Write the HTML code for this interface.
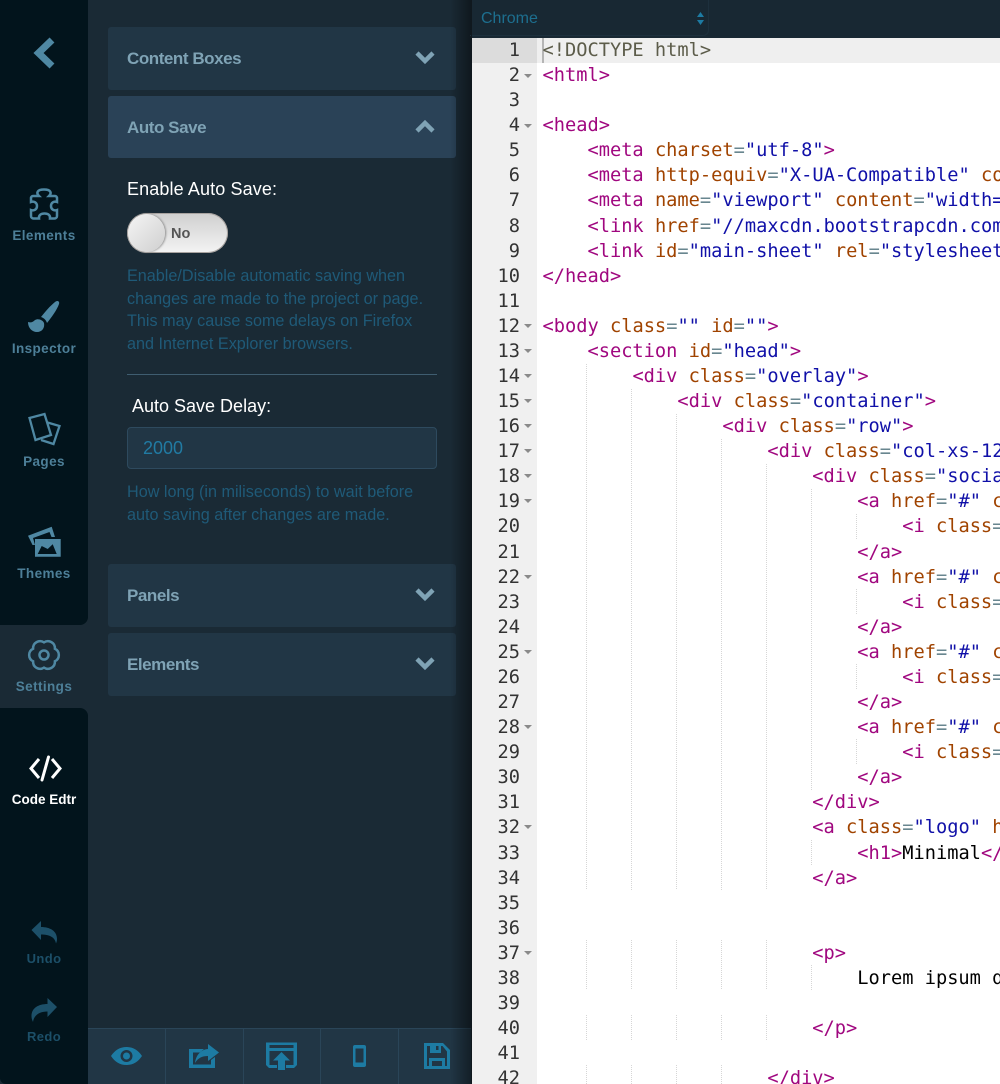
<!DOCTYPE html>
<html><head><meta charset="utf-8"><title>Editor</title>
<style>
html,body{margin:0;padding:0;width:1000px;height:1084px;overflow:hidden;background:#1a2a35;font-family:"Liberation Sans",sans-serif}
#wrap{position:relative;width:1000px;height:1084px;overflow:hidden;background:#1a2a35}
.abs,.nl,.bar,.lb,.p{position:absolute}
.nav{position:absolute;left:0;width:88px;background:#02141c}
.nl{left:0;width:88px;text-align:center;font-size:13.5px;font-weight:700;color:#4d7f98;letter-spacing:.4px;line-height:16px}
.bar{left:108px;width:348px;height:63px;background:#213645;border-radius:3px}
.bar.on{background:#2a4257}
.bar b{position:absolute;left:19px;top:21px;font-size:17px;line-height:22px;color:#7fa3b5;letter-spacing:-.45px}
.p{left:127px;font-size:16.2px;line-height:22.5px;color:#1f5a78;white-space:nowrap}
.lb{color:#fff;font-size:18px;line-height:22px;white-space:nowrap}
#code,#nums{position:absolute;top:38px;font-family:"DejaVu Sans Mono",monospace;font-size:18.68px;line-height:25.08px;color:#000;height:1046px;overflow:hidden}
#code{left:542.5px;width:458px}
#nums{left:472px;width:48px;text-align:right;color:#333}
#code div,#nums div{height:25.08px;white-space:pre}
.t{color:#a0077f}.a{color:#a04300}.s{color:#1010a8}.o{color:#68868f}.d{color:#5c5c4a}
</style></head><body><div id="wrap">

<!-- side panel -->
<div class="bar" style="top:27px"><b>Content Boxes</b></div>
<div class="bar on" style="top:96px;height:62px"><b>Auto Save</b></div>
<div class="bar" style="top:564px"><b>Panels</b></div>
<div class="bar" style="top:633px"><b>Elements</b></div>

<div class="lb" style="left:127px;top:178px;letter-spacing:.12px">Enable Auto Save:</div>
<div class="abs" style="left:127px;top:213px;width:101px;height:40px;border-radius:20px;background:linear-gradient(#cfcfcf,#f4f4f4);box-shadow:inset 0 0 0 1px #a8a3a0"></div>
<div class="abs" style="left:128px;top:214px;width:37px;height:38px;border-radius:50%;background:linear-gradient(135deg,#f5f5f5,#cfcfcf);box-shadow:1px 0 2px #8a8a8a"></div>
<div class="abs" style="left:171px;top:225px;font-size:14.5px;line-height:18px;font-weight:700;color:#555">No</div>

<div class="p" style="top:265px">Enable/Disable automatic saving when<br>changes are made to the project or page.<br>This may cause some delays on Firefox<br>and Internet Explorer browsers.</div>
<div class="abs" style="left:127px;top:374px;width:310px;height:1px;background:#3f5d70"></div>
<div class="lb" style="left:132px;top:395px">Auto Save Delay:</div>
<div class="abs" style="left:127px;top:427px;width:308px;height:40px;background:#213645;border:1px solid #2e4a5e;border-radius:4px"></div>
<div class="abs" style="left:143px;top:437px;font-size:18px;line-height:22px;color:#217ba3">2000</div>
<div class="p" style="top:481px">How long (in miliseconds) to wait before<br>auto saving after changes are made.</div>

<!-- bottom toolbar -->
<div class="abs" style="left:88px;top:1028px;width:384px;height:56px;background:#213645;border-top:1px solid #2a4558;box-sizing:border-box"></div>
<div class="abs" style="left:165px;top:1028px;width:1px;height:56px;background:#2a4558"></div>
<div class="abs" style="left:243px;top:1028px;width:1px;height:56px;background:#2a4558"></div>
<div class="abs" style="left:320px;top:1028px;width:1px;height:56px;background:#2a4558"></div>
<div class="abs" style="left:398px;top:1028px;width:1px;height:56px;background:#2a4558"></div>
<div class="abs" style="left:450px;top:0;width:22px;height:1084px;background:linear-gradient(90deg,rgba(0,0,0,0),rgba(0,0,0,.45))"></div>

<!-- left nav -->
<div class="nav" style="top:0;height:625px;border-bottom-right-radius:8px"></div>
<div class="nav" style="top:708px;height:376px;border-top-right-radius:8px;border-bottom-left-radius:6px"></div>
<div class="nl" style="top:228px">Elements</div>
<div class="nl" style="top:341px">Inspector</div>
<div class="nl" style="top:454px">Pages</div>
<div class="nl" style="top:566px">Themes</div>
<div class="nl" style="top:679px">Settings</div>
<div class="nl" style="top:792px;color:#fff;letter-spacing:0">Code Edtr</div>
<div class="nl" style="top:951px;color:#1c4f68;font-size:13px">Undo</div>
<div class="nl" style="top:1029px;color:#1c4f68;font-size:13px">Redo</div>

<svg class="abs" style="left:0;top:0" width="472" height="1084" viewBox="0 0 472 1084">
<g fill="none" stroke="#4f88a3">
<path d="M52 40 38.500 53 52 66" stroke-width="7"/>
<path d="M39 196C36 193 37 189.500 44 189.500S52 193 49 196H55A2 2 0 0 1 57 198V202C54 201 51 202.500 51 206S54 211 57 210V216A2.500 2.500 0 0 1 54.500 218.500H50C50.500 215 48 213.500 44.500 213.500S38.500 215 39 218.500H33.500A2.500 2.500 0 0 1 31 216V210C34 211 37 209.500 37 206S34 201 31 202V198A2 2 0 0 1 33 196Z" stroke-width="2.500"/>
<path d="M29.500 418 44.500 414 51 435 35.500 440zM47.500 422.500 59.500 426 53.500 444 41 440" stroke-width="2.300"/>
<path d="M54.900 648.700A7 7 0 0 1 54.900 661.300 7 7 0 0 1 44 667.600 7 7 0 0 1 33.100 661.300 7 7 0 0 1 33.100 648.700 7 7 0 0 1 44 642.400 7 7 0 0 1 54.900 648.700z" stroke-width="2.500"/>
<circle cx="44" cy="655" r="4.500" stroke-width="2.500"/>
</g>
<g fill="#4f88a3">
<path d="M55 302c2-2 5-1 4 2-2 6-8 14-12 19-1-3-3-5-6-6 4-5 9-11 14-15z"/>
<path d="M28 322c3 1 5 0 7-2 3-2 8 0 9 3 1 5-2 9-7 9-5 0-9-4-9-10z"/>
<path d="M28 535.700 51.700 526.700 55 537H51.500L49.500 532 33 538 35 545H32.500z"/>
<path d="M35 539H60.700V556.700H35zM37.700 554H56.700L52.700 544.300 47.700 549 41.700 546z" fill-rule="evenodd"/>
</g>
<g fill="none" stroke="#fff" stroke-width="3">
<path d="M39 759 31 768.500 39 778M52 759 60 768.500 52 778"/>
<path d="M48.500 757 42 780" stroke-linecap="round"/>
</g>
<g fill="#1d5069">
<path d="M31.500 930 41 921V927C50 927 57 931 57 939 57 941 56.500 942 56 943.500 55 937 49 934.500 41 934.500V940z"/>
<path d="M57 1007 47.500 998V1004C38.500 1004 31.500 1008 31.500 1016 31.500 1019 32.500 1020.500 33 1022 34 1015 39.500 1011.500 47.500 1011.500V1017z"/>
</g>
<!-- toolbar icons -->
<g fill="#1d7ba3">
<path fill-rule="evenodd" d="M111 1056C115 1050 120 1047 126.500 1047S138 1050 142 1056C138 1062 133 1065 126.500 1065S115 1062 111 1056ZM126.500 1050A6 6 0 1 0 126.500 1062 6 6 0 0 0 126.500 1050Z"/>
<circle cx="126.500" cy="1056" r="3.500"/>
<path d="M189 1049H204L200 1052.500H193V1064.500H211V1060L215 1057V1068H189z"/>
<path d="M208 1044 219 1052.500 208 1061V1056C202 1056 198 1058 195 1063 196 1055 201 1049.500 208 1049z"/>
<path d="M266 1042.500H297V1065L294 1068H286V1065H293.500V1051H269.500V1065H277V1068H269L266 1065ZM269.500 1045V1048H293.500V1045Z" fill-rule="evenodd"/>
<path d="M281.500 1052 290 1060.500H285V1070H278V1060.500H273z"/>
<path fill-rule="evenodd" d="M355 1045H364A2 2 0 0 1 366 1047V1065A2 2 0 0 1 364 1067H355A2 2 0 0 1 353 1065V1047A2 2 0 0 1 355 1045ZM355.500 1048.500V1062.500H363.500V1048.500Z"/>
<path fill-rule="evenodd" d="M424 1043H443L450 1050V1069H424ZM427 1046V1066H429V1058H445V1066H447V1051.500L442.500 1046H441V1053H430V1046ZM432 1061V1066H442V1061ZM436 1046V1050H438.500V1046Z"/>
</g>
<!-- chevrons -->
<g fill="none" stroke="#7fa3b5" stroke-width="4.500">
<path d="M417 53 425 61 433 53"/>
<path d="M417 131 425 123 433 131"/>
<path d="M417 590 425 598 433 590"/>
<path d="M417 659 425 667 433 659"/>
</g>
</svg>

<!-- editor -->
<div class="abs" style="left:472px;top:0;width:528px;height:38px;background:#182833"></div>
<div class="abs" style="left:470px;top:0;width:239px;height:36px;border:1px solid #1d303d;border-radius:0 0 6px 0;box-sizing:border-box;border-left:0;border-top:0"></div>
<div class="abs" style="left:481px;top:9px;font-size:16px;line-height:20px;color:#1d6f8f">Chrome</div>
<svg class="abs" style="left:694px;top:10px" width="14" height="18"><path d="M3 7 6.500 2 10 7zM3 10H10L6.500 15z" fill="#1d7ba3"/></svg>

<div class="abs" style="left:472px;top:38px;width:528px;height:1046px;background:#fff"></div>
<div class="abs" style="left:472px;top:38px;width:65px;height:1046px;background:#f0f0f0"></div>
<div class="abs" style="left:537px;top:38px;width:463px;height:25px;background:#efefef"></div>
<div class="abs" style="left:472px;top:38px;width:65px;height:25px;background:#dcdcdc"></div>
<div class="abs" style="left:542px;top:38px;width:2px;height:25px;background:#b5b5b5"></div>
<div class="abs" style="left:471px;top:0;width:1px;height:1084px;background:#10181e"></div>

<svg class="abs" style="left:472px;top:38px" width="528" height="1046">
<g fill="#8a8a8a">
<path d="M52 36H60L56 40z"/>
<path d="M52 86H60L56 90z"/><path d="M52 286H60L56 290z"/><path d="M52 311H60L56 315z"/><path d="M52 336H60L56 340z"/><path d="M52 361H60L56 365z"/><path d="M52 386H60L56 390z"/><path d="M52 411H60L56 415z"/><path d="M52 436H60L56 440z"/><path d="M52 461H60L56 465z"/><path d="M52 537H60L56 541z"/><path d="M52 612H60L56 616z"/><path d="M52 687H60L56 691z"/><path d="M52 787H60L56 791z"/><path d="M52 913H60L56 917z"/>
</g>
<g stroke="#d6d6d6" stroke-width="1" stroke-dasharray="1 1" fill="none">
<path d="M114.500 326V852M114.500 902V952M114.500 977V1002M114.500 1027V1046"/>
<path d="M159.500 351V852M159.500 902V952M159.500 977V1002M159.500 1027V1046"/>
<path d="M204.500 376V852M204.500 902V952M204.500 977V1002M204.500 1027V1046"/>
<path d="M249.500 401V852M249.500 902V952M249.500 977V1002M249.500 1027V1046"/>
<path d="M294.500 426V852M294.500 902V952M294.500 977V1002"/>
<path d="M339.500 451V752M339.500 802V827M339.500 927V952"/>
<path d="M384.500 476V501M384.500 551V576M384.500 626V651M384.500 701V726"/>
</g>
</svg>

<div id="nums"><div>1</div><div>2</div><div>3</div><div>4</div><div>5</div><div>6</div><div>7</div><div>8</div><div>9</div><div>10</div><div>11</div><div>12</div><div>13</div><div>14</div><div>15</div><div>16</div><div>17</div><div>18</div><div>19</div><div>20</div><div>21</div><div>22</div><div>23</div><div>24</div><div>25</div><div>26</div><div>27</div><div>28</div><div>29</div><div>30</div><div>31</div><div>32</div><div>33</div><div>34</div><div>35</div><div>36</div><div>37</div><div>38</div><div>39</div><div>40</div><div>41</div><div>42</div></div>

<div id="code"><div class="d">&lt;!DOCTYPE html&gt;</div>
<div class="t">&lt;html&gt;</div>
<div></div>
<div class="t">&lt;head&gt;</div>
<div>    <span class="t">&lt;meta</span> <span class="a">charset</span><span class="o">=</span><span class="s">"utf-8"</span><span class="t">&gt;</span></div>
<div>    <span class="t">&lt;meta</span> <span class="a">http-equiv</span><span class="o">=</span><span class="s">"X-UA-Compatible"</span> <span class="a">content</span></div>
<div>    <span class="t">&lt;meta</span> <span class="a">name</span><span class="o">=</span><span class="s">"viewport"</span> <span class="a">content</span><span class="o">=</span><span class="s">"width=device</span></div>
<div>    <span class="t">&lt;link</span> <span class="a">href</span><span class="o">=</span><span class="s">"//maxcdn.bootstrapcdn.com/boot</span></div>
<div>    <span class="t">&lt;link</span> <span class="a">id</span><span class="o">=</span><span class="s">"main-sheet"</span> <span class="a">rel</span><span class="o">=</span><span class="s">"stylesheet"</span></div>
<div class="t">&lt;/head&gt;</div>
<div></div>
<div><span class="t">&lt;body</span> <span class="a">class</span><span class="o">=</span><span class="s">""</span> <span class="a">id</span><span class="o">=</span><span class="s">""</span><span class="t">&gt;</span></div>
<div>    <span class="t">&lt;section</span> <span class="a">id</span><span class="o">=</span><span class="s">"head"</span><span class="t">&gt;</span></div>
<div>        <span class="t">&lt;div</span> <span class="a">class</span><span class="o">=</span><span class="s">"overlay"</span><span class="t">&gt;</span></div>
<div>            <span class="t">&lt;div</span> <span class="a">class</span><span class="o">=</span><span class="s">"container"</span><span class="t">&gt;</span></div>
<div>                <span class="t">&lt;div</span> <span class="a">class</span><span class="o">=</span><span class="s">"row"</span><span class="t">&gt;</span></div>
<div>                    <span class="t">&lt;div</span> <span class="a">class</span><span class="o">=</span><span class="s">"col-xs-12"</span></div>
<div>                        <span class="t">&lt;div</span> <span class="a">class</span><span class="o">=</span><span class="s">"social"</span></div>
<div>                            <span class="t">&lt;a</span> <span class="a">href</span><span class="o">=</span><span class="s">"#"</span> <span class="a">class</span></div>
<div>                                <span class="t">&lt;i</span> <span class="a">class</span><span class="o">=</span><span class="s">"fa</span></div>
<div>                            <span class="t">&lt;/a&gt;</span></div>
<div>                            <span class="t">&lt;a</span> <span class="a">href</span><span class="o">=</span><span class="s">"#"</span> <span class="a">class</span></div>
<div>                                <span class="t">&lt;i</span> <span class="a">class</span><span class="o">=</span><span class="s">"fa</span></div>
<div>                            <span class="t">&lt;/a&gt;</span></div>
<div>                            <span class="t">&lt;a</span> <span class="a">href</span><span class="o">=</span><span class="s">"#"</span> <span class="a">class</span></div>
<div>                                <span class="t">&lt;i</span> <span class="a">class</span><span class="o">=</span><span class="s">"fa</span></div>
<div>                            <span class="t">&lt;/a&gt;</span></div>
<div>                            <span class="t">&lt;a</span> <span class="a">href</span><span class="o">=</span><span class="s">"#"</span> <span class="a">class</span></div>
<div>                                <span class="t">&lt;i</span> <span class="a">class</span><span class="o">=</span><span class="s">"fa</span></div>
<div>                            <span class="t">&lt;/a&gt;</span></div>
<div>                        <span class="t">&lt;/div&gt;</span></div>
<div>                        <span class="t">&lt;a</span> <span class="a">class</span><span class="o">=</span><span class="s">"logo"</span> <span class="a">href</span></div>
<div>                            <span class="t">&lt;h1&gt;</span>Minimal<span class="t">&lt;/h1&gt;</span></div>
<div>                        <span class="t">&lt;/a&gt;</span></div>
<div></div>
<div></div>
<div>                        <span class="t">&lt;p&gt;</span></div>
<div>                            Lorem ipsum dolor</div>
<div></div>
<div>                        <span class="t">&lt;/p&gt;</span></div>
<div></div>
<div>                    <span class="t">&lt;/div&gt;</span></div></div>
</div></body></html>
